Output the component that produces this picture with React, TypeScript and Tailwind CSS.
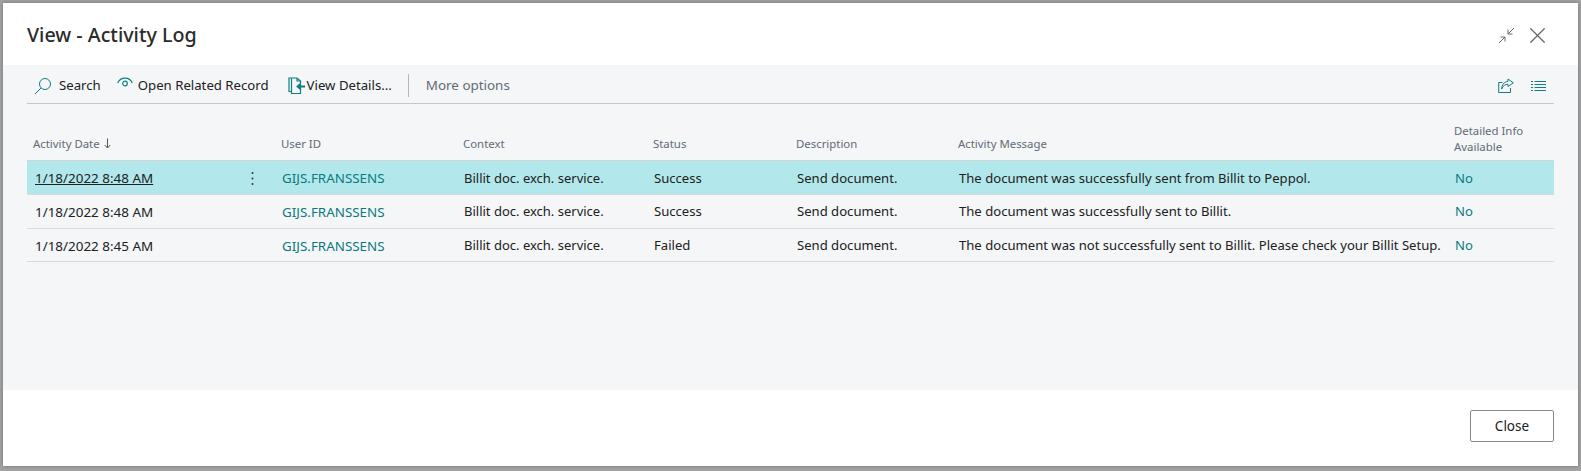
import { X } from "lucide-react";

const rows = [
  { date: "1/18/2022 8:48 AM", status: "Success", message: "The document was successfully sent from Billit to Peppol." },
  { date: "1/18/2022 8:48 AM", status: "Success", message: "The document was successfully sent to Billit." },
  { date: "1/18/2022 8:45 AM", status: "Failed", message: "The document was not successfully sent to Billit. Please check your Billit Setup." },
];

const cols = "grid grid-cols-[254px_182px_190px_143px_162px_496px_100px]";

const SearchIcon = () => (
  <svg width="18" height="18" viewBox="0 0 18 18" fill="none" stroke="#0f7f83" strokeWidth="1">
    <circle cx="11" cy="7" r="5.5" />
    <path d="M7 11 L1 17" />
  </svg>
);

const EyeIcon = () => (
  <svg width="16" height="12" viewBox="0 0 16 12" fill="none" stroke="#0f7f83" strokeWidth="1.2">
    <path d="M0.7 6 C3.5 -0.6 12.5 -0.6 15.3 6" />
    <circle cx="8" cy="6.5" r="2.3" />
  </svg>
);

const ViewDetailsIcon = () => (
  <svg width="18" height="18" viewBox="0 0 18 18" fill="none" stroke="#0f7f83" strokeWidth="1.2">
    <path d="M3.5 14.5 H1 V1 H9 L12.5 4 V6" />
    <path d="M3.5 1 V16.5 H12.5 V13" />
    <path d="M9 1 V4 H12.5" />
    <path d="M17 9.5 H11" strokeWidth="2" />
    <path d="M12.5 6.5 L9 9.5 L12.5 12.5 Z" fill="#0f7f83" />
  </svg>
);

const ShareIcon = () => (
  <svg width="16" height="16" viewBox="0 0 16 16" fill="none" stroke="#0f7f83" strokeWidth="1">
    <path d="M4.5 4.5 H0.7 V14.5 H12.5 V10" />
    <path d="M10 1 L15.3 4.8 L10 8.5 V6.3 C7.5 6.3 5 7.5 3.7 11 C3.7 7 6 3.6 10 3.4 Z" />
  </svg>
);

const ListIcon = () => (
  <svg width="15" height="11" viewBox="0 0 15 11" fill="none" stroke="#0f7f83" strokeWidth="1">
    <path d="M0 1.5 H2 M3.5 1.5 H15 M0 4.5 H2 M3.5 4.5 H15 M0 7.5 H2 M3.5 7.5 H15 M0 10.5 H2 M3.5 10.5 H15" />
  </svg>
);

const CollapseIcon = () => (
  <svg width="17" height="17" viewBox="0 0 17 17" fill="none" stroke="#6b6b6b" strokeWidth="1">
    <path d="M16 1 L10 7 M10 2.5 V7 H14.5" />
    <path d="M1 16 L7 10 M2.5 10 H7 V14.5" />
  </svg>
);

const SortArrow = () => (
  <svg className="ml-[1px] inline-block align-[-1px]" width="7" height="11" viewBox="0 0 7 11" fill="none" stroke="#555555" strokeWidth="1">
    <path d="M3.5 0.5 V10 M0.7 7 L3.5 10 L6.3 7" />
  </svg>
);

export default function App() {
  return (
    <div className="h-[471px] w-[1581px] overflow-hidden bg-[#a3a3a3] pt-[3px] pl-[3px] font-['Noto_Sans','Open_Sans',sans-serif] text-[13.1px] text-[#212121]">
      <div className="flex h-[463px] w-[1575px] flex-col bg-white shadow-[0_0_4px_rgba(0,0,0,0.3)]">
        {/* Title */}
        <div className="flex h-[62px] shrink-0 items-center justify-between pt-[2px] pl-[24px] pr-[27px]">
          <h1 className="text-[19.7px] font-medium text-[#2b2b2b]">View - Activity Log</h1>
          <div className="flex items-center gap-[9px]">
            <CollapseIcon />
            <X className="h-[27px] w-[27px] text-[#666666]" strokeWidth={1.15} />
          </div>
        </div>

        {/* Content */}
        <div className="flex h-[325px] shrink-0 flex-col bg-[#f5f6f8] pl-[24px]">
          <div className="flex h-[39px] w-[1527px] shrink-0 items-center border-b border-[#c6c7c9] pt-[3px] pl-[7px] pr-[8px] text-[13.2px]">
            <SearchIcon />
            <span className="ml-[7px]">Search</span>
            <span className="ml-[16px] mb-[5px]"><EyeIcon /></span>
            <span className="ml-[5px]">Open Related Record</span>
            <span className="ml-[19px]"><ViewDetailsIcon /></span>
            <span className="ml-[1px]">View Details...</span>
            <div className="ml-[16px] h-[23px] w-px bg-[#b5b6b8]" />
            <span className="ml-[17px] text-[13.4px] text-[#5f6b76]">More options</span>
            <div className="ml-auto flex items-center gap-[17px]">
              <ShareIcon />
              <ListIcon />
            </div>
          </div>

          <div className={`${cols} mt-[18px] h-[38px] w-[1527px] shrink-0 items-end pb-[5px] text-[11.4px] leading-[16px] text-[#5f6b76]`}>
            <div className="pb-[3px] pl-[6px]">Activity Date <SortArrow /></div>
            <div className="pb-[3px]">User ID</div>
            <div className="pb-[3px]">Context</div>
            <div className="pb-[3px]">Status</div>
            <div className="pb-[3px]">Description</div>
            <div className="pb-[3px]">Activity Message</div>
            <div>Detailed Info<br />Available</div>
          </div>

          <div className="w-[1527px] border-t border-[#d2d3d5]">
            {rows.map((row, i) => (
              <div
                key={i}
                className={`${cols} h-[33.8px] items-center border-b border-[#d8d9db] pt-[2px] ${i === 0 ? "bg-[#b2e8eb]" : ""}`}
              >
                <div className="flex items-center justify-between pr-[27px] pl-[8px]">
                  <span className={`text-[13.45px] ${i === 0 ? "underline" : ""}`}>{row.date}</span>
                  {i === 0 && (
                    <svg width="3" height="15" viewBox="0 0 3 15" fill="#333333">
                      <circle cx="1.5" cy="2" r="1" />
                      <circle cx="1.5" cy="7.5" r="1" />
                      <circle cx="1.5" cy="13" r="1" />
                    </svg>
                  )}
                </div>
                <div className="pl-[1px] text-[13.4px] text-[#0a7a80]">GIJS.FRANSSENS</div>
                <div className="pl-[1px] text-[13px]">Billit doc. exch. service.</div>
                <div className="pl-[1px]">{row.status}</div>
                <div className="pl-[1px]">Send document.</div>
                <div className="pl-[1px]">{row.message}</div>
                <div className="pl-[1px] text-[#0a7a80]">No</div>
              </div>
            ))}
          </div>
        </div>

        {/* Footer */}
        <div className="flex flex-1 items-center justify-end pr-[24px] pb-[4px]">
          <button className="h-[32px] w-[84px] rounded-[2px] border border-[#8a8a8a] bg-white text-[13.5px] text-[#212121]">
            Close
          </button>
        </div>
      </div>
    </div>
  );
}
